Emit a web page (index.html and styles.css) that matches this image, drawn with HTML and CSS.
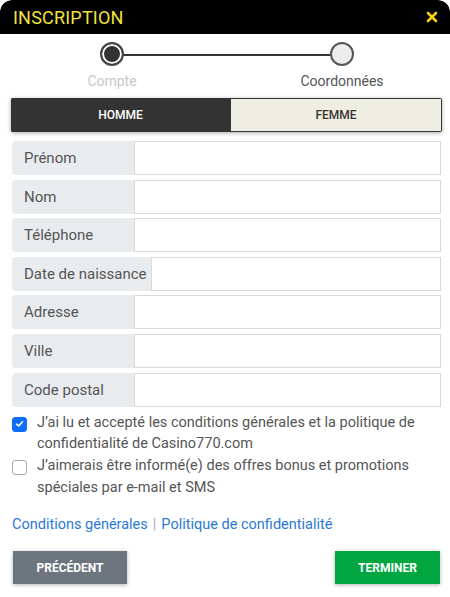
FILE: index.html
```html
<!DOCTYPE html>
<html lang="fr">
<head>
<meta charset="utf-8">
<title>Inscription</title>
<link rel="stylesheet" href="styles.css">
</head>
<body>
<div class="modal">
  <header class="head">
    <h1 class="title">INSCRIPTION</h1>
    <span class="close">
      <svg width="12" height="12" viewBox="0 0 12 12"><path d="M2 2 L10 10 M10 2 L2 10" stroke="#f5cf16" stroke-width="2.6" stroke-linecap="round"/></svg>
    </span>
  </header>
  <div class="steps">
    <div class="track"></div>
    <div class="step">
      <span class="dot done"></span>
      <span class="step-label muted">Compte</span>
    </div>
    <div class="step">
      <span class="dot todo"></span>
      <span class="step-label">Coordonnées</span>
    </div>
  </div>
  <div class="gender">
    <div class="g-btn active">HOMME</div>
    <div class="g-btn">FEMME</div>
  </div>
  <form class="fields">
    <div class="row"><label class="lab">Prénom</label><span class="inp"></span></div>
    <div class="row"><label class="lab">Nom</label><span class="inp"></span></div>
    <div class="row"><label class="lab">Téléphone</label><span class="inp"></span></div>
    <div class="row"><label class="lab wide">Date de naissance</label><span class="inp"></span></div>
    <div class="row"><label class="lab">Adresse</label><span class="inp"></span></div>
    <div class="row"><label class="lab">Ville</label><span class="inp"></span></div>
    <div class="row"><label class="lab">Code postal</label><span class="inp"></span></div>
  </form>
  <div class="checks">
    <div class="check">
      <span class="box on"><svg width="9" height="8" viewBox="0 0 9 8"><path d="M1.5 4.2 L3.6 6 L7.5 1.8" fill="none" stroke="#fff" stroke-width="1.6" stroke-linecap="round" stroke-linejoin="round"/></svg></span>
      <span class="ctext">J’ai lu et accepté les conditions générales et la politique de confidentialité de Casino770.com</span>
    </div>
    <div class="check">
      <span class="box"></span>
      <span class="ctext">J’aimerais être informé(e) des offres bonus et promotions spéciales par e-mail et SMS</span>
    </div>
  </div>
  <div class="links">
    <a class="link">Conditions générales</a><span class="sep">|</span><a class="link">Politique de confidentialité</a>
  </div>
  <div class="actions">
    <button class="btn prev">PRÉCÉDENT</button>
    <button class="btn next">TERMINER</button>
  </div>
</div>
</body>
</html>
```
FILE: styles.css
```css
html, body {
  margin: 0;
  padding: 0;
  background: #fff;
}
body {
  font-family: Roboto, "Liberation Sans", sans-serif;
  color: #555;
}
.modal {
  width: 450px;
  height: 597px;
  background: #fff;
  border-radius: 12px;
  overflow: hidden;
}
.head {
  height: 34px;
  background: #000;
  border-radius: 12px 12px 0 0;
  display: flex;
  align-items: center;
  justify-content: space-between;
  padding: 0 12px 0 13px;
}
.title {
  margin: 0;
  font-size: 18px;
  font-weight: 400;
  color: #f2e23c;
  letter-spacing: 0.2px;
}
.close {
  display: flex;
  margin-top: -1px;
}
.steps {
  position: relative;
  height: 64px;
  display: flex;
  justify-content: space-between;
  padding: 0 58px 0 62px;
}
.track {
  position: absolute;
  left: 112px;
  right: 109px;
  top: 20px;
  height: 2px;
  background: #333;
}
.step {
  position: relative;
  display: flex;
  flex-direction: column;
  align-items: center;
  width: 100px;
  padding-top: 8px;
}
.dot {
  width: 20px;
  height: 20px;
  border-radius: 50%;
  border: 2px solid #555;
  box-sizing: content-box;
}
.dot.done {
  background: #333;
  box-shadow: inset 0 0 0 2px #fff;
  border-color: #444;
}
.dot.todo {
  background: #ececec;
}
.step-label {
  margin-top: 7px;
  font-size: 14px;
  color: #555;
  white-space: nowrap;
}
.step-label.muted {
  color: #c8c8c8;
}
.gender {
  margin: 0 8px 0 11px;
  height: 34px;
  display: flex;
  box-shadow: 0 1px 4px rgba(0,0,0,0.35);
  border-radius: 2px;
  overflow: hidden;
}
.g-btn {
  flex: 1;
  display: flex;
  align-items: center;
  justify-content: center;
  font-size: 12px;
  font-weight: 500;
  background: #efeee3;
  color: #3a3333;
  border: 1px solid #333;
}
.g-btn.active {
  background: #333;
  color: #fff;
  flex: 0 0 217px;
}
.fields {
  margin: 9px 9px 0 12px;
  display: flex;
  flex-direction: column;
  gap: 4.6px;
}
.row {
  display: flex;
  height: 34px;
}
.lab {
  flex: 0 0 122px;
  background: #e9ecef;
  border-radius: 4px 0 0 4px;
  display: flex;
  align-items: center;
  padding-left: 12px;
  box-sizing: border-box;
  font-size: 15px;
  color: #555;
}
.lab.wide {
  flex-basis: 139px;
}
.inp {
  flex: 1;
  border: 1px solid #d9d9d9;
  background: #fff;
}
.checks {
  margin: 5px 12px 0 12px;
  display: flex;
  flex-direction: column;
  gap: 0;
}
.check {
  display: flex;
  align-items: flex-start;
  gap: 10px;
  font-size: 14.5px;
  line-height: 21.7px;
  color: #555;
}
.box {
  flex: 0 0 13px;
  height: 13px;
  margin-top: 5px;
  border: 1px solid #aaa;
  border-radius: 3px;
  background: #fff;
  display: flex;
  align-items: center;
  justify-content: center;
}
.box.on {
  background: #0d6efd;
  border-color: #0d6efd;
}
.links {
  margin: 18px 12px 0 12px;
  font-size: 14.5px;
  color: #2a7ad3;
}
.link {
  color: #2a7ad3;
}
.sep {
  color: #aaa;
  margin: 0 5px;
}
.actions {
  margin: 18px 10px 0 13px;
  display: flex;
  justify-content: space-between;
}
.btn {
  height: 33px;
  border: none;
  border-radius: 0;
  font-family: Roboto, "Liberation Sans", sans-serif;
  font-size: 12px;
  font-weight: 700;
  color: #fff;
  box-shadow: 0 1px 4px rgba(0,0,0,0.3);
  padding: 0;
}
.btn.prev {
  width: 114px;
  background: #6c757d;
}
.btn.next {
  width: 105px;
  background: #00a640;
}
```
